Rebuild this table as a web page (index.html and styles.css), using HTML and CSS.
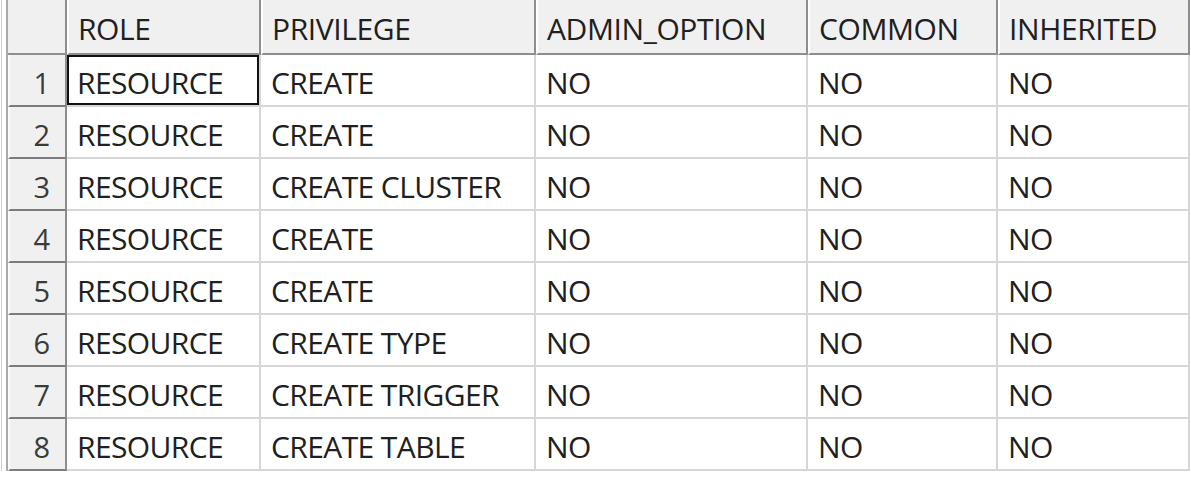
FILE: index.html
```html
<!DOCTYPE html>
<html>
<head>
<meta charset="utf-8">
<link rel="stylesheet" href="styles.css">
</head>
<body>
<div class="frame">
  <div class="grid">
    <div class="corner"></div>
    <div class="hcell">ROLE</div>
    <div class="hcell">PRIVILEGE</div>
    <div class="hcell">ADMIN_OPTION</div>
    <div class="hcell">COMMON</div>
    <div class="hcell">INHERITED</div>

    <div class="rnum">1</div>
    <div class="cell sel">RESOURCE</div>
    <div class="cell">CREATE</div>
    <div class="cell">NO</div>
    <div class="cell">NO</div>
    <div class="cell">NO</div>

    <div class="rnum">2</div>
    <div class="cell">RESOURCE</div>
    <div class="cell">CREATE</div>
    <div class="cell">NO</div>
    <div class="cell">NO</div>
    <div class="cell">NO</div>

    <div class="rnum">3</div>
    <div class="cell">RESOURCE</div>
    <div class="cell">CREATE CLUSTER</div>
    <div class="cell">NO</div>
    <div class="cell">NO</div>
    <div class="cell">NO</div>

    <div class="rnum">4</div>
    <div class="cell">RESOURCE</div>
    <div class="cell">CREATE</div>
    <div class="cell">NO</div>
    <div class="cell">NO</div>
    <div class="cell">NO</div>

    <div class="rnum">5</div>
    <div class="cell">RESOURCE</div>
    <div class="cell">CREATE</div>
    <div class="cell">NO</div>
    <div class="cell">NO</div>
    <div class="cell">NO</div>

    <div class="rnum">6</div>
    <div class="cell">RESOURCE</div>
    <div class="cell">CREATE TYPE</div>
    <div class="cell">NO</div>
    <div class="cell">NO</div>
    <div class="cell">NO</div>

    <div class="rnum">7</div>
    <div class="cell">RESOURCE</div>
    <div class="cell">CREATE TRIGGER</div>
    <div class="cell">NO</div>
    <div class="cell">NO</div>
    <div class="cell">NO</div>

    <div class="rnum">8</div>
    <div class="cell">RESOURCE</div>
    <div class="cell">CREATE TABLE</div>
    <div class="cell">NO</div>
    <div class="cell">NO</div>
    <div class="cell">NO</div>
  </div>
</div>
</body>
</html>
```

FILE: styles.css
```css
html, body {
  margin: 0;
  padding: 0;
  background: #ffffff;
}

body {
  font-family: "Open Sans", "Noto Sans", sans-serif;
  color: #202020;
}

.frame {
  margin-left: 1px;
  border-left: 1px solid #cfcfcf;
  padding-left: 4px;
  width: 1190px;
  box-sizing: border-box;
}

.grid {
  display: grid;
  grid-template-columns: 59px 194px 275px 272px 190px 192px;
  grid-template-rows: 55px repeat(8, 52px);
  border-left: 2px solid #a9a9a9;
  width: max-content;
}

.corner {
  background: #f0f0f0;
  border-right: 2px solid #8e8e8e;
  border-bottom: 2px solid #8e8e8e;
}

.hcell {
  background: #f0f0f0;
  border-left: 2px solid #ffffff;
  border-right: 2px solid #8e8e8e;
  border-bottom: 2px solid #8e8e8e;
  display: flex;
  align-items: center;
  padding: 3px 0 0 9px;
  font-size: 30px;
  letter-spacing: -0.4px;
  white-space: nowrap;
  overflow: hidden;
}

.rnum {
  background: #f0f0f0;
  border-left: 2px solid #fbfbfb;
  border-right: 2px solid #8e8e8e;
  border-bottom: 2px solid #7c7c7c;
  display: flex;
  align-items: center;
  justify-content: flex-end;
  padding: 4px 15px 0 0;
  font-size: 29px;
  color: #3a3a3a;
}

.cell {
  background: #ffffff;
  border-right: 2px solid #d6d6d6;
  border-bottom: 2px solid #d6d6d6;
  display: flex;
  align-items: center;
  padding: 4px 0 0 10px;
  font-size: 30px;
  letter-spacing: -0.6px;
  white-space: nowrap;
  overflow: hidden;
}

.sel {
  box-shadow: inset 0 0 0 2px #111111;
}
```
